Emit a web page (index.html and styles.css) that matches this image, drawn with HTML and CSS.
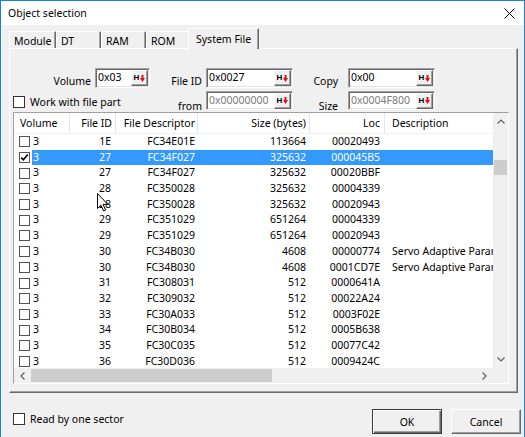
FILE: index.html
```html
<!DOCTYPE html>
<html>
<head>
<meta charset="utf-8">
<link rel="stylesheet" href="styles.css">
</head>
<body>
<div class="window">
  <div class="titlebar">
    <span class="title">Object selection</span>
    <svg class="close" width="11" height="11" viewBox="0 0 11 11"><path d="M0.5 0.5 L10.5 10.5 M10.5 0.5 L0.5 10.5" stroke="#000" stroke-width="1"/></svg>
  </div>
  <div class="client">
    <div class="tabs">
      <div class="tab t-module">Module</div>
      <div class="tab t-dt">DT</div>
      <div class="tab t-ram">RAM</div>
      <div class="tab t-rom">ROM</div>
      <div class="tab sel">System File</div>
    </div>
    <div class="panel">
      <div class="fields">
        <span class="lbl lbl-a">Volume</span>
        <div class="edit"><span class="val">0x03</span><span class="hbtn"><b>H</b><svg width="5" height="7" viewBox="0 0 5 7"><rect x="1.5" y="0" width="2" height="3.5" fill="#e01010"/><path d="M0 3 L5 3 L2.5 7 Z" fill="#e01010"/></svg></span></div>
        <span class="lbl lbl-b">File ID</span>
        <div class="edit"><span class="val">0x0027</span><span class="hbtn"><b>H</b><svg width="5" height="7" viewBox="0 0 5 7"><rect x="1.5" y="0" width="2" height="3.5" fill="#e01010"/><path d="M0 3 L5 3 L2.5 7 Z" fill="#e01010"/></svg></span></div>
        <span class="lbl lbl-c">Copy</span>
        <div class="edit"><span class="val">0x00</span><span class="hbtn"><b>H</b><svg width="5" height="7" viewBox="0 0 5 7"><rect x="1.5" y="0" width="2" height="3.5" fill="#e01010"/><path d="M0 3 L5 3 L2.5 7 Z" fill="#e01010"/></svg></span></div>

        <label class="chk chk-row2"><span class="box"></span><span>Work with file part</span></label>
        <span class="lbl lbl-b low">from</span>
        <div class="edit dis"><span class="val">0x00000000</span><span class="hbtn"><b>H</b><svg width="5" height="7" viewBox="0 0 5 7"><rect x="1.5" y="0" width="2" height="3.5" fill="#e01010"/><path d="M0 3 L5 3 L2.5 7 Z" fill="#e01010"/></svg></span></div>
        <span class="lbl lbl-c low">Size</span>
        <div class="edit dis"><span class="val">0x0004F800</span><span class="hbtn"><b>H</b><svg width="5" height="7" viewBox="0 0 5 7"><rect x="1.5" y="0" width="2" height="3.5" fill="#e01010"/><path d="M0 3 L5 3 L2.5 7 Z" fill="#e01010"/></svg></span></div>
      </div>

      <div class="list">
        <div class="viewport">
          <div class="hdr">
            <span class="h c1">Volume</span>
            <span class="h c2">File ID</span>
            <span class="h c3">File Descriptor</span>
            <span class="h c4">Size (bytes)</span>
            <span class="h c5">Loc</span>
            <span class="h c6">Description</span>
          </div>
          <div class="row"><span class="c1"><span class="cb"></span>3</span><span class="c2">1E</span><span class="c3">FC34E01E</span><span class="c4">113664</span><span class="c5">00020493</span><span class="c6"></span></div>
          <div class="row sel"><span class="c1"><span class="cb on"><svg width="9" height="9" viewBox="0 0 9 9"><path d="M1.2 4.6 L3.4 6.8 L7.8 1.6" fill="none" stroke="#000" stroke-width="1.6"/></svg></span>3</span><span class="c2">27</span><span class="c3">FC34F027</span><span class="c4">325632</span><span class="c5">000045B5</span><span class="c6"></span></div>
          <div class="row"><span class="c1"><span class="cb"></span>3</span><span class="c2">27</span><span class="c3">FC34F027</span><span class="c4">325632</span><span class="c5">00020BBF</span><span class="c6"></span></div>
          <div class="row"><span class="c1"><span class="cb"></span>3</span><span class="c2">28</span><span class="c3">FC350028</span><span class="c4">325632</span><span class="c5">00004339</span><span class="c6"></span></div>
          <div class="row"><span class="c1"><span class="cb"></span>3</span><span class="c2">28</span><span class="c3">FC350028</span><span class="c4">325632</span><span class="c5">00020943</span><span class="c6"></span></div>
          <div class="row"><span class="c1"><span class="cb"></span>3</span><span class="c2">29</span><span class="c3">FC351029</span><span class="c4">651264</span><span class="c5">00004339</span><span class="c6"></span></div>
          <div class="row"><span class="c1"><span class="cb"></span>3</span><span class="c2">29</span><span class="c3">FC351029</span><span class="c4">651264</span><span class="c5">00020943</span><span class="c6"></span></div>
          <div class="row"><span class="c1"><span class="cb"></span>3</span><span class="c2">30</span><span class="c3">FC34B030</span><span class="c4">4608</span><span class="c5">00000774</span><span class="c6">Servo Adaptive Parameters</span></div>
          <div class="row"><span class="c1"><span class="cb"></span>3</span><span class="c2">30</span><span class="c3">FC34B030</span><span class="c4">4608</span><span class="c5">0001CD7E</span><span class="c6">Servo Adaptive Parameters</span></div>
          <div class="row"><span class="c1"><span class="cb"></span>3</span><span class="c2">31</span><span class="c3">FC308031</span><span class="c4">512</span><span class="c5">0000641A</span><span class="c6"></span></div>
          <div class="row"><span class="c1"><span class="cb"></span>3</span><span class="c2">32</span><span class="c3">FC309032</span><span class="c4">512</span><span class="c5">00022A24</span><span class="c6"></span></div>
          <div class="row"><span class="c1"><span class="cb"></span>3</span><span class="c2">33</span><span class="c3">FC30A033</span><span class="c4">512</span><span class="c5">0003F02E</span><span class="c6"></span></div>
          <div class="row"><span class="c1"><span class="cb"></span>3</span><span class="c2">34</span><span class="c3">FC30B034</span><span class="c4">512</span><span class="c5">0005B638</span><span class="c6"></span></div>
          <div class="row"><span class="c1"><span class="cb"></span>3</span><span class="c2">35</span><span class="c3">FC30C035</span><span class="c4">512</span><span class="c5">00077C42</span><span class="c6"></span></div>
          <div class="row"><span class="c1"><span class="cb"></span>3</span><span class="c2">36</span><span class="c3">FC30D036</span><span class="c4">512</span><span class="c5">0009424C</span><span class="c6"></span></div>
        </div>
        <div class="vscroll">
          <span class="arrow"><svg width="8" height="5" viewBox="0 0 8 5"><path d="M0.5 4.5 L4 1 L7.5 4.5" fill="none" stroke="#606060" stroke-width="1.2"/></svg></span>
          <span class="vthumb"></span>
          <span class="fill"></span>
          <span class="arrow"><svg width="8" height="5" viewBox="0 0 8 5"><path d="M0.5 0.5 L4 4 L7.5 0.5" fill="none" stroke="#606060" stroke-width="1.2"/></svg></span>
        </div>
        <div class="hscroll">
          <span class="arrow"><svg width="5" height="8" viewBox="0 0 5 8"><path d="M4.5 0.5 L1 4 L4.5 7.5" fill="none" stroke="#606060" stroke-width="1.2"/></svg></span>
          <span class="hthumb"></span>
          <span class="fill"></span>
          <span class="arrow"><svg width="5" height="8" viewBox="0 0 5 8"><path d="M0.5 0.5 L4 4 L0.5 7.5" fill="none" stroke="#606060" stroke-width="1.2"/></svg></span>
        </div>
        <div class="corner"></div>
      </div>
    </div>

    <div class="footer">
      <label class="chk"><span class="box"></span><span>Read by one sector</span></label>
      <span class="btn ok">OK</span>
      <span class="btn">Cancel</span>
    </div>
  </div>

  <svg class="cursor" width="12" height="19" viewBox="0 0 12 19"><path d="M0.5 0.5 L0.5 15.5 L4 12.2 L6.6 18 L8.6 17.1 L6.1 11.4 L10.8 11.4 Z" fill="#fff" stroke="#000" stroke-width="1"/></svg>
</div>
</body>
</html>
```

FILE: styles.css
```css
html, body {
  margin: 0;
  padding: 0;
}
body {
  width: 525px;
  height: 437px;
  overflow: hidden;
  background: #f0f0f0;
  font-family: "Noto Sans", "Open Sans", sans-serif;
  font-size: 10.5px;
  color: #000;
}
.window {
  position: relative;
  width: 525px;
  height: 437px;
  box-sizing: border-box;
  border: 1px solid #1883d7;
  border-bottom: none;
  background: #f0f0f0;
  overflow: hidden;
}
.titlebar {
  height: 24px;
  background: #fff;
  display: flex;
  align-items: center;
  justify-content: space-between;
  padding: 0 9px 0 7px;
}
.title {
  font-size: 10.5px;
  line-height: 14px;
}
.close {
  display: block;
}
.client {
  padding: 3px 3px 0 8px;
}

/* tabs */
.tabs {
  display: flex;
  align-items: flex-end;
  height: 20px;
}
.tab {
  box-sizing: border-box;
  height: 17px;
  border-top: 1px solid #fff;
  border-left: 1px solid #fff;
  border-right: 1px solid #696969;
  box-shadow: inset -1px 0 #a0a0a0;
  padding: 2px 0 0 4px;
  line-height: 14px;
  white-space: nowrap;
}
.t-module { width: 47px; }
.t-dt { width: 45px; }
.t-ram { width: 45px; }
.t-rom { width: 44px; }
.tab.sel {
  position: relative;
  z-index: 1;
  width: 71px;
  height: 21px;
  margin-left: -2px;
  margin-bottom: -1px;
  background: #f0f0f0;
  padding: 3px 0 0 7px;
}

/* panel */
.panel {
  box-sizing: border-box;
  width: 509px;
  height: 345px;
  border-top: 1px solid #fff;
  border-left: 1px solid #fff;
  border-right: 1px solid #696969;
  border-bottom: 1px solid #696969;
  box-shadow: inset -1px -1px #a0a0a0;
  padding-top: 19px;
}
.fields {
  margin-left: 4px;
  display: grid;
  grid-template-columns: 81px 55px 56px 87px 55px 87px;
  grid-template-rows: 20px 19px;
  row-gap: 3px;
}
.lbl {
  align-self: end;
  text-align: right;
  line-height: 14px;
  white-space: nowrap;
}
.lbl-a { padding-right: 4px; }
.lbl-b { padding-right: 4px; }
.lbl-c { padding-right: 10px; }
.lbl.low { margin-bottom: -3px; }

.edit {
  box-sizing: border-box;
  display: flex;
  align-items: center;
  justify-content: space-between;
  background: #fff;
  border-top: 1px solid #a0a0a0;
  border-left: 1px solid #a0a0a0;
  border-bottom: 1px solid #fff;
  border-right: 1px solid #fff;
  box-shadow: inset 1px 1px #696969, inset -1px -1px #e3e3e3;
  padding: 0 1px 0 2px;
}
.val {
  line-height: 14px;
  margin-top: -2px;
  white-space: nowrap;
}
.edit.dis .val {
  color: #7a7a7a;
}
.hbtn {
  box-sizing: border-box;
  width: 17px;
  height: 16px;
  display: flex;
  align-items: center;
  justify-content: center;
  gap: 1px;
  background: #f0f0f0;
  border-top: 1px solid #fff;
  border-left: 1px solid #fff;
  border-right: 1px solid #696969;
  border-bottom: 1px solid #696969;
  box-shadow: inset -1px -1px #a0a0a0;
}
.hbtn b {
  font-family: "Liberation Sans", Arial, sans-serif;
  font-size: 8px;
  font-weight: bold;
  line-height: 8px;
  color: #000;
}
.hbtn svg {
  display: block;
}

.chk {
  display: flex;
  align-items: center;
  white-space: nowrap;
  line-height: 14px;
}
.chk .box {
  box-sizing: border-box;
  width: 12px;
  height: 12px;
  background: #fff;
  border: 1px solid #333;
  margin-left: -1px;
  margin-right: 5px;
}
.chk-row2 {
  grid-column: 1 / span 2;
  align-self: center;
  margin-top: 2px;
}

/* list */
.list {
  box-sizing: border-box;
  width: 496px;
  height: 272px;
  margin: 2px 0 0 3px;
  border-top: 1px solid #a0a0a0;
  border-left: 1px solid #a0a0a0;
  border-right: 1px solid #fff;
  border-bottom: 1px solid #fff;
  background: #fff;
  display: grid;
  grid-template-columns: 479px 15px;
  grid-template-rows: 255px 15px;
}
.viewport {
  overflow: hidden;
  background: #fff;
}
.hdr {
  display: flex;
  height: 21px;
  box-sizing: border-box;
  border-bottom: 1px solid #f0f0f0;
  width: 600px;
}
.h {
  box-sizing: border-box;
  border-right: 1px solid #e5e5e5;
  line-height: 20px;
  white-space: nowrap;
  flex: none;
}
.c1 { width: 56px; }
.c2 { width: 46px; }
.c3 { width: 82px; }
.c4 { width: 112px; }
.c5 { width: 75px; }
.c6 { width: 160px; }
.h.c1 { padding-left: 6px; }
.h.c2 { text-align: right; padding-right: 3px; }
.h.c3 { text-align: right; padding-right: 2px; }
.h.c4 { text-align: right; padding-right: 3px; }
.h.c5 { text-align: right; padding-right: 4px; }
.h.c6 { padding-left: 7px; border-right: none; }

.row {
  display: flex;
  height: 15.7px;
  line-height: 15.7px;
  width: 600px;
  white-space: nowrap;
}
.row > span {
  box-sizing: border-box;
  flex: none;
  overflow: hidden;
}
.row .c1 {
  display: flex;
  align-items: center;
}
.row .c2 { text-align: right; padding-right: 5px; }
.row .c3 { text-align: right; padding-right: 3px; }
.row .c4 { text-align: right; padding-right: 4px; }
.row .c5 { text-align: right; padding-right: 5px; }
.row .c6 { padding-left: 7px; width: 200px; }
.cb {
  box-sizing: border-box;
  width: 11px;
  height: 11px;
  border: 1px solid #555;
  background: #fff;
  margin: 0 3px 0 5px;
  display: flex;
  align-items: center;
  justify-content: center;
}
.cb svg { display: block; }
.row.sel {
  background: linear-gradient(90deg, transparent 18px, #3399ff 18px);
  color: #fff;
}

/* scrollbars */
.vscroll {
  background: #f0f0f0;
  display: flex;
  flex-direction: column;
}
.vscroll .arrow {
  height: 17px;
  display: flex;
  align-items: center;
  justify-content: center;
}
.vthumb {
  height: 15px;
  margin: 30px 1px 0 1px;
  background: #cdcdcd;
}
.fill { flex: 1; }
.hscroll {
  background: #f0f0f0;
  display: flex;
}
.hscroll .arrow {
  width: 17px;
  display: flex;
  align-items: center;
  justify-content: center;
}
.hthumb {
  width: 241px;
  margin: 1px 0;
  background: #cdcdcd;
}
.corner {
  background: #f0f0f0;
}

/* footer */
.footer {
  display: flex;
  align-items: flex-start;
  margin-top: 16px;
  padding-left: 5px;
}
.footer .chk {
  margin-top: 3px;
}
.btn {
  box-sizing: border-box;
  width: 70px;
  height: 25px;
  display: flex;
  align-items: center;
  justify-content: center;
  border-top: 1px solid #fff;
  border-left: 1px solid #fff;
  border-right: 1px solid #696969;
  border-bottom: 1px solid #696969;
  box-shadow: inset -1px -1px #a0a0a0;
  background: #f0f0f0;
  margin-left: 9px;
}
.btn.ok {
  margin-left: auto;
  border: 1px solid #3c3c3c;
  box-shadow: inset 1px 1px #fff, inset -1px -1px #696969, inset -2px -2px #a0a0a0;
}

.cursor {
  position: absolute;
  left: 96px;
  top: 192px;
}
```
